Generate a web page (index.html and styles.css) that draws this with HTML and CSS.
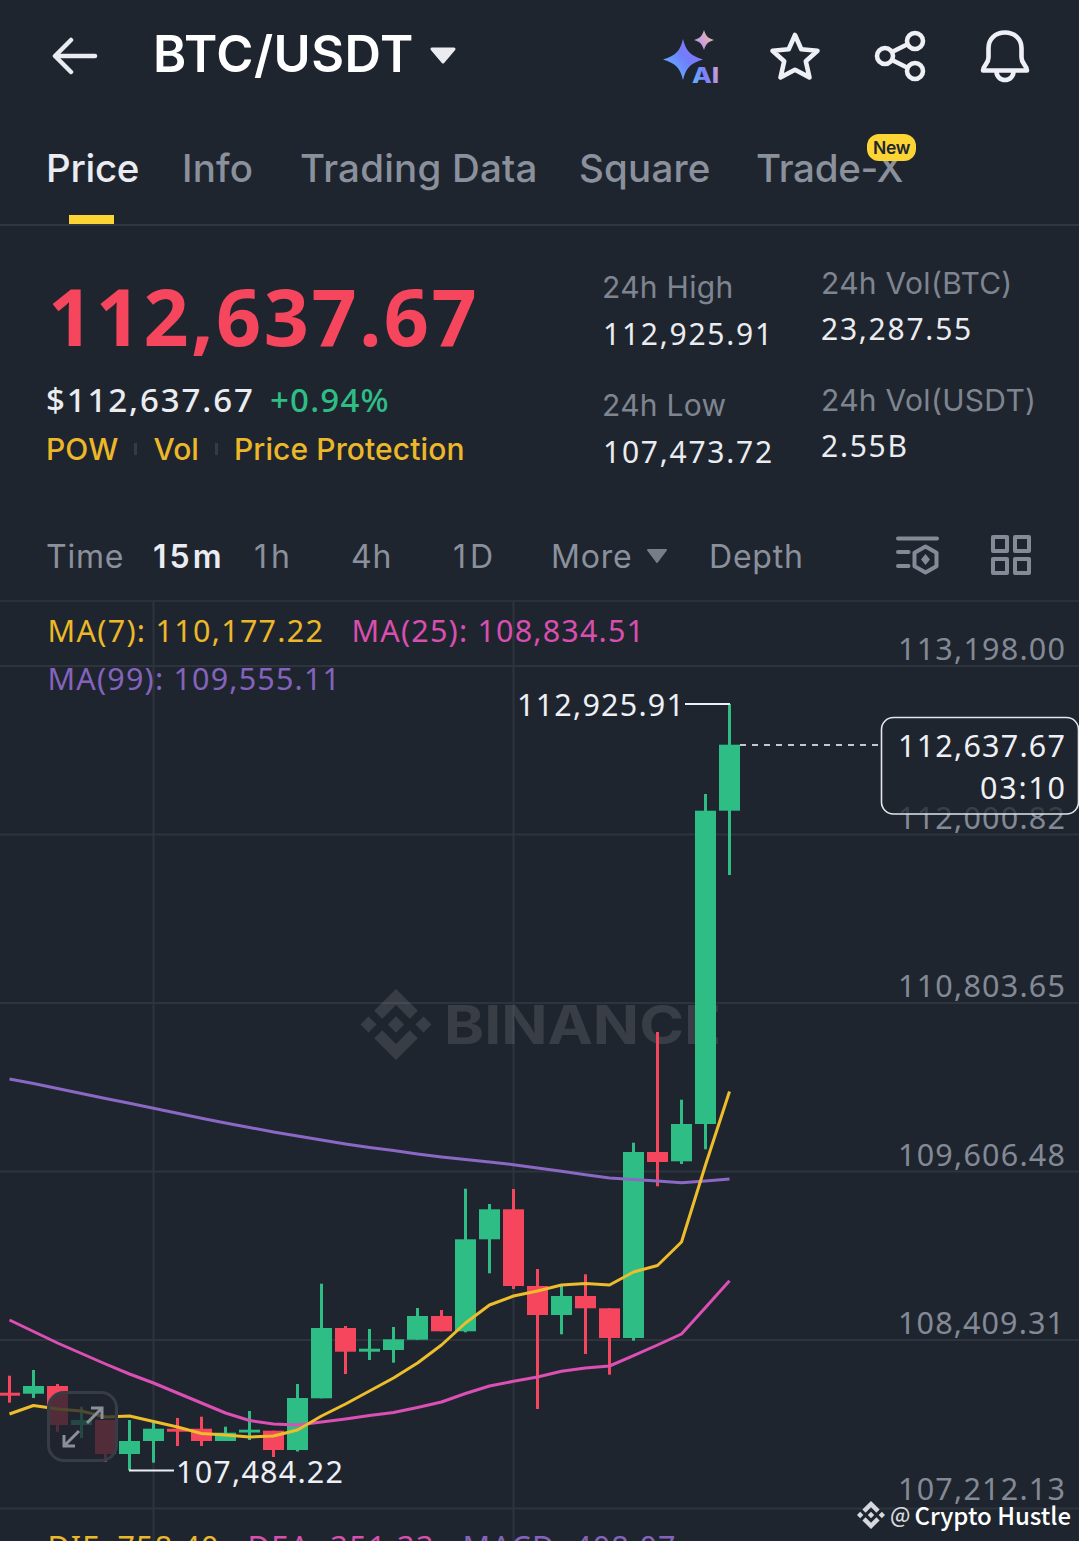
FILE: index.html
```html
<!DOCTYPE html>
<html lang="en">
<head>
    <meta charset="UTF-8">
    <meta name="viewport" content="width=device-width, initial-scale=1.0">
    <title>BTC/USDT</title>
    <link rel="stylesheet" href="styles.css">
</head>
<body>
    <header class="header">
        <svg class="back" width="46" height="38" viewBox="0 0 46 38"><path d="M43 19H4M19 3L3 19l16 16"/></svg>
        <h1 class="pair">BTC/USDT</h1>
        <svg class="caret" width="28" height="20" viewBox="0 0 28 20"><path d="M3 3h22L14 16z"/></svg>
        <div class="actions">
            <svg class="assistant" width="58" height="58" viewBox="0 0 58 58">
                <defs>
                    <linearGradient id="star" x1="0" y1="1" x2="1" y2="0.2">
                        <stop offset="0" stop-color="#5cc8ff"/>
                        <stop offset="0.6" stop-color="#717cfb"/>
                        <stop offset="1" stop-color="#8a7cff"/>
                    </linearGradient>
                    <linearGradient id="spark" x1="0" y1="0.8" x2="1" y2="0.2">
                        <stop offset="0" stop-color="#b094ff"/>
                        <stop offset="1" stop-color="#f3b79c"/>
                    </linearGradient>
                    <linearGradient id="ai" x1="0" y1="0.6" x2="1" y2="0.4">
                        <stop offset="0" stop-color="#62b4f8"/>
                        <stop offset="0.5" stop-color="#7a80fa"/>
                        <stop offset="1" stop-color="#d3a0d8"/>
                    </linearGradient>
                </defs>
                <path fill="url(#star)" d="M21 10C24 22 28 26.500 41 30.500C28 34.500 24 39 21 51C18 39 14 34.500 1 30.500C14 26.500 18 22 21 10z"/>
                <path fill="url(#spark)" d="M42 1C44 7.500 46 9 52 11C46 13 44 14.500 42 21C40 14.500 38 13 32 11C38 9 40 7.500 42 1z"/>
                <text class="ai" x="30" y="54" fill="url(#ai)" textLength="27" lengthAdjust="spacingAndGlyphs">AI</text>
            </svg>
            <svg class="line-icon" width="52" height="52" viewBox="0 0 52 52"><path d="M26 5l6.300 14.200 16.200 1.600-11.700 10.400 3.700 16.200L26 39.800 11.500 47.400l3.700-16.200L3.500 20.800l16.200-1.600z"/></svg>
            <svg class="line-icon" width="52" height="52" viewBox="0 0 52 52"><circle cx="11" cy="26" r="8"/><circle cx="41" cy="11" r="8"/><circle cx="41" cy="41" r="8"/><path d="M18 22l16-8M18 30l16 8"/></svg>
            <svg class="line-icon" width="52" height="54" viewBox="0 0 52 54"><path d="M26 3.500C16.500 3.500 9.500 10 9.500 19v9.500C9.500 35 4 36.500 4 41.500h44C48 36.500 42.500 35 42.500 28.500V19C42.500 10 35.500 3.500 26 3.500zM17.500 42.500a8.500 8.500 0 0 0 17 0"/></svg>
        </div>
    </header>

    <nav class="tabs">
        <a class="tab active">Price</a>
        <a class="tab">Info</a>
        <a class="tab">Trading Data</a>
        <a class="tab">Square</a>
        <a class="tab trade">Trade-X<span class="badge">New</span></a>
    </nav>

    <section class="summary">
        <div class="quote">
            <div class="last">112,637.67</div>
            <div class="fiat"><span class="usd">$112,637.67</span><span class="change">+0.94%</span></div>
            <div class="tags"><span>POW</span><i></i><span>Vol</span><i></i><span>Price Protection</span></div>
        </div>
        <dl class="stats">
            <dt>24h High</dt>
            <dd>112,925.91</dd>
            <dt>24h Low</dt>
            <dd>107,473.72</dd>
        </dl>
        <dl class="stats volume">
            <dt>24h Vol(BTC)</dt>
            <dd>23,287.55</dd>
            <dt>24h Vol(USDT)</dt>
            <dd>2.55B</dd>
        </dl>
    </section>

    <nav class="intervals">
        <span>Time</span>
        <span class="selected">15m</span>
        <span class="wide">1h</span>
        <span>4h</span>
        <span class="wide">1D</span>
        <span class="more">More<svg width="22" height="16" viewBox="0 0 22 16"><path d="M2 2h18L11 14z"/></svg></span>
        <span>Depth</span>
        <svg class="tool" width="44" height="44" viewBox="0 0 44 44"><path d="M2 5.500h39M2 19h10.500M2 33h10.500M29.500 13.500l11 6.300v13.400l-11 6.300-11-6.300V19.800z"/><path class="solid" d="M29.500 21l4.500 5.500-4.500 5.500-4.500-5.500z"/></svg>
        <svg class="tool" width="42" height="44" viewBox="0 0 42 44"><path d="M3 4h14v14H3zM25 4h14v14H25zM3 26h14v14H3zM25 26h14v14H25z"/></svg>
    </nav>

    <main class="chart">
        <svg id="chart" width="1079" height="939" viewBox="0 602 1079 939">
            <g class="grid">
                <path d="M0 666H1079M0 834.500H1079M0 1003H1079M0 1171.500H1079M0 1340H1079M0 1508.500H1079M153.500 602V1541M513.500 602V1541"/>
            </g>
            <g class="watermark">
                <svg x="360" y="989" width="72" height="71" viewBox="0 0 126.610 126.610"><use href="#logo"/></svg>
                <text x="444" y="1044" textLength="277" lengthAdjust="spacingAndGlyphs">BINANCE</text>
            </g>
            <g class="axis">
                <text x="898" y="660" textLength="167">113,198.00</text>
                <text x="898" y="829" textLength="167">112,000.82</text>
                <text x="898" y="997" textLength="167">110,803.65</text>
                <text x="898" y="1166" textLength="167">109,606.48</text>
                <text x="898" y="1334" textLength="166">108,409.31</text>
                <text x="898" y="1500" textLength="167">107,212.13</text>
            </g>
            <g id="candles"></g>
            <polyline class="ma99" id="ma99"/>
            <polyline class="ma25" id="ma25"/>
            <polyline class="ma7" id="ma7"/>
            <g class="legend">
                <text class="c7" x="47.500" y="642" textLength="275.500">MA(7): 110,177.22</text>
                <text class="c25" x="351.500" y="642" textLength="292.500">MA(25): 108,834.51</text>
                <text class="c99" x="47.500" y="690" textLength="292.500">MA(99): 109,555.11</text>
                <text class="c7" x="47.500" y="1558" textLength="171">DIF: 758.40</text>
                <text class="c25" x="247.500" y="1558" textLength="186">DEA: 351.33</text>
                <text class="c99" x="462.500" y="1558" textLength="213">MACD: 408.07</text>
            </g>
            <g class="marks">
                <path d="M685 704H730M129 1470.500H174"/>
                <path class="dash" d="M740 745H880"/>
                <rect x="881.500" y="717.500" width="197" height="96.500" rx="12"/>
                <text x="517" y="716" textLength="167">112,925.91</text>
                <text x="176" y="1483" textLength="167">107,484.22</text>
                <text x="898" y="757" textLength="167">112,637.67</text>
                <text x="980" y="799" textLength="85">03:10</text>
            </g>
            <defs>
                <path id="logo" d="M38.730 53.200l24.590-24.580 24.600 24.600 14.300-14.310L63.320 0l-38.900 38.900zM0 63.310l14.300-14.310 14.310 14.310-14.310 14.300zM38.730 73.410l24.590 24.590 24.600-24.600 14.310 14.290-38.900 38.910-38.910-38.880zM98 63.310l14.300-14.310 14.310 14.300-14.310 14.320zM77.830 63.300L63.320 48.780 48.790 63.300l14.530 14.500z"/>
            </defs>
        </svg>
        <button class="expand"><svg width="44" height="44" viewBox="0 0 44 44"><path d="M26 18L41 3M30 3h11v11M18 26L3 41M3 30v11h11"/></svg></button>
        <div class="credit">
            <svg width="28" height="28" viewBox="0 0 126.610 126.610"><use href="#logo"/></svg>
            <span class="at">@</span><span>Crypto Hustle</span>
        </div>
    </main>

    <script>
        // [direction, high, body top, body bottom, low] in chart coordinates
        const candles = [
            ['down', 1375.7, 1392.7, 1395.7, 1402.7],
            ['up', 1370, 1386, 1393.7, 1398],
            ['down', 1384, 1386, 1425, 1431.7],
            ['up', 1406.7, 1420, 1425, 1438],
            ['down', 1420, 1420, 1454, 1461.7],
            ['up', 1420, 1441, 1454, 1470.3],
            ['up', 1422.7, 1428.7, 1441, 1462.7],
            ['down', 1418, 1428.7, 1431.7, 1446],
            ['down', 1416.7, 1428.7, 1441, 1446],
            ['up', 1426.7, 1432.7, 1441, 1441],
            ['up', 1411, 1429.7, 1432.5, 1440],
            ['down', 1430.7, 1430.7, 1450, 1457],
            ['up', 1384, 1398, 1450, 1451.5],
            ['up', 1283.7, 1328, 1398.3, 1398.3],
            ['down', 1326, 1328, 1351.7, 1374],
            ['up', 1329, 1348.7, 1351.7, 1360],
            ['up', 1327, 1339.3, 1350, 1362.7],
            ['up', 1308, 1316, 1339.7, 1339.7],
            ['down', 1310, 1316, 1331.3, 1331.3],
            ['up', 1188.7, 1239.3, 1331.3, 1332.3],
            ['up', 1204, 1209.3, 1239.3, 1273.3],
            ['down', 1189, 1209.3, 1286, 1289],
            ['down', 1269, 1286, 1315, 1409],
            ['up', 1285.7, 1296, 1315, 1334.3],
            ['down', 1274.3, 1296, 1308.3, 1354],
            ['down', 1308.3, 1308.3, 1338, 1374.7],
            ['up', 1142.7, 1152, 1338, 1340.7],
            ['down', 1032, 1152, 1162, 1186.3],
            ['up', 1099.7, 1124, 1161.3, 1164],
            ['up', 794, 810.7, 1124, 1149.3],
            ['up', 704, 744.7, 810.7, 875]
        ];
        const ma7 = [1414, 1405.5, 1409, 1411, 1417, 1416, 1421.5, 1427, 1433.5, 1435, 1437, 1436, 1430, 1416, 1404, 1391, 1378, 1363, 1345, 1323, 1305, 1296, 1291, 1285, 1283.5, 1285, 1272, 1265.5, 1242, 1165, 1091.5];
        const ma25 = [1320, 1331.5, 1343, 1353.5, 1364, 1374, 1383, 1393, 1403, 1413, 1420.5, 1424, 1425, 1422, 1419, 1415.5, 1412.5, 1407.5, 1402, 1393.5, 1386, 1381.3, 1377, 1371.3, 1368, 1366, 1355.7, 1345, 1334, 1307.5, 1280.7];
        const ma99 = [1079, 1083.5, 1088.5, 1093.5, 1098.5, 1103.3, 1108.3, 1113.3, 1118.3, 1123, 1127.5, 1132, 1136, 1140, 1144, 1147.5, 1150.5, 1154, 1157, 1159.5, 1162, 1164.7, 1168, 1171.3, 1174.7, 1178, 1179.5, 1181, 1182.7, 1181, 1179];

        const x = i => 9.5 + i * 24;

        document.getElementById('candles').innerHTML = candles.map(([dir, high, top, bottom, low], i) =>
            `<g class="${dir}"><rect x="${x(i) - 1.5}" y="${high}" width="3" height="${low - high}"/>` +
            `<rect x="${x(i) - 10.5}" y="${top}" width="21" height="${bottom - top}"/></g>`
        ).join('');

        function drawLine(id, values) {
            document.getElementById(id).setAttribute('points', values.map((y, i) => x(i) + ',' + y).join(' '));
        }
        drawLine('ma7', ma7);
        drawLine('ma25', ma25);
        drawLine('ma99', ma99);
    </script>
</body>
</html>
```
FILE: styles.css
```css
* {
    box-sizing: border-box;
}
body {
    margin: 0;
    width: 1079px;
    height: 1541px;
    overflow: hidden;
    background: #1f252f;
    color: #eaecef;
    font-family: Inter, "Noto Sans", sans-serif;
}
svg {
    display: block;
    flex: none;
}
.header {
    display: flex;
    align-items: center;
    height: 112px;
    padding: 0 48px 0 52px;
}
.back {
    fill: none;
    stroke: #eaecf2;
    stroke-width: 4.5;
    stroke-linecap: round;
    stroke-linejoin: round;
}
.pair {
    margin: -5px 0 0 55px;
    width: 276px;
    color: #fff;
    font-size: 50.5px;
    font-weight: 600;
    letter-spacing: 0.5px;
    white-space: nowrap;
}
.caret {
    fill: #eaecf2;
    stroke: #eaecf2;
    stroke-width: 3;
    stroke-linejoin: round;
}
.actions {
    display: flex;
    align-items: center;
    gap: 53px;
    margin-left: auto;
}
.assistant {
    margin: 4px -4px 0 0;
}
.ai {
    font-size: 21px;
    font-weight: 800;
}
.line-icon {
    fill: none;
    stroke: #eef0f5;
    stroke-width: 4.6;
    stroke-linejoin: round;
}
.tabs {
    display: grid;
    grid-template-columns: 136px 118px 279px 177px 160px;
    height: 114px;
    padding-left: 46px;
    border-bottom: 2px solid #303741;
}
.tab {
    position: relative;
    justify-self: start;
    padding-top: 33px;
    color: #8b919c;
    font-size: 38.5px;
    font-weight: 500;
    line-height: 47px;
    letter-spacing: 0.2px;
    white-space: nowrap;
}
.tab.active {
    color: #eaecf2;
    letter-spacing: -0.3px;
}
.tab.trade {
    letter-spacing: -0.3px;
}
.tab.active::after {
    content: "";
    position: absolute;
    left: 23px;
    bottom: 0;
    width: 45px;
    height: 9px;
    background: #fcd535;
}
.badge {
    position: absolute;
    left: 111px;
    top: 22px;
    width: 49px;
    height: 27px;
    border-radius: 12px;
    background: #fcd535;
    color: #202630;
    font-size: 17.5px;
    font-weight: 600;
    line-height: 27px;
    letter-spacing: -0.4px;
    text-align: center;
}
.summary {
    display: grid;
    grid-template-columns: 556px 219px auto;
    height: 284px;
    padding-left: 46px;
}
.quote {
    padding-top: 43px;
}
.last {
    padding-left: 2px;
    color: #f6465d;
    font-family: "Noto Sans", sans-serif;
    font-size: 79px;
    font-weight: 700;
    line-height: 94px;
    letter-spacing: 2.5px;
}
.fiat {
    display: flex;
    margin-top: 17px;
    font-family: "Noto Sans", sans-serif;
    font-size: 33px;
    font-weight: 500;
    line-height: 40px;
    letter-spacing: 1.9px;
}
.usd {
    width: 224px;
}
.change {
    color: #2ebd85;
    letter-spacing: 1.2px;
}
.tags {
    display: flex;
    align-items: center;
    margin-top: 10px;
    color: #ecb82a;
    font-size: 30px;
    font-weight: 500;
    line-height: 38px;
    letter-spacing: 0.1px;
    white-space: nowrap;
}
.tags i {
    width: 3px;
    height: 12px;
    margin: 0 16px;
    background: #343b46;
}
.stats {
    margin: 0;
    padding-top: 41px;
    font-size: 30px;
}
.stats dt {
    color: #7f8590;
    line-height: 40px;
    letter-spacing: 0.3px;
}
.stats dd {
    margin: 7px 0 31px 1px;
    font-family: "Noto Sans", sans-serif;
    line-height: 40px;
    letter-spacing: 1.75px;
}
.volume {
    padding-top: 37px;
}
.volume dd {
    margin: 6px 0 31px;
}
.intervals {
    display: grid;
    grid-template-columns: 107px 101px 97px 102px 98px 158px 187px 94px 42px;
    align-items: center;
    height: 92px;
    padding-left: 46px;
    border-bottom: 2px solid #2a313c;
    color: #8b919c;
    font-size: 32px;
    letter-spacing: 0.8px;
    white-space: nowrap;
}
.intervals span {
    padding-top: 2px;
}
.intervals .selected {
    color: #eaecf2;
    font-weight: 600;
    letter-spacing: 3px;
}
.intervals .wide {
    letter-spacing: 4px;
}
.more {
    display: flex;
    align-items: center;
    gap: 14px;
}
.more svg {
    fill: #777d89;
    stroke: #777d89;
    stroke-width: 2;
    stroke-linejoin: round;
}
.tool {
    fill: none;
    stroke: #858a96;
    stroke-width: 4;
    stroke-linecap: round;
    stroke-linejoin: round;
}
.tool .solid {
    fill: #858a96;
    stroke: none;
}
.chart {
    position: relative;
    height: 939px;
}
.axis,
.legend,
.marks {
    font-family: "Noto Sans", sans-serif;
    font-size: 30.5px;
}
.grid path {
    stroke: #2d343e;
    stroke-width: 2;
}
.watermark {
    fill: #fff;
    font-size: 54px;
    font-weight: 700;
    opacity: 0.11;
}
.axis {
    fill: #848a95;
}
.up {
    fill: #2ebd85;
}
.down {
    fill: #f6465d;
}
polyline {
    fill: none;
    stroke-width: 3;
    stroke-linejoin: round;
}
.ma7 {
    stroke: #eebd2c;
}
.ma25 {
    stroke: #dc4fb4;
}
.ma99 {
    stroke: #8a68c3;
}
.c7 {
    fill: #ecb82a;
}
.c25 {
    fill: #d94fb0;
}
.c99 {
    fill: #8563bd;
}
.marks {
    fill: #eef0f5;
}
.marks path {
    stroke: #eef0f5;
    stroke-width: 2;
}
.marks .dash {
    stroke: #c3c7ce;
    stroke-dasharray: 6 6;
}
.marks rect {
    fill: #1f252f;
    fill-opacity: 0.75;
    stroke: #e3e5ea;
    stroke-width: 1.6;
}
.expand {
    position: absolute;
    left: 47px;
    top: 789px;
    width: 71px;
    height: 71px;
    padding: 0;
    display: grid;
    place-items: center;
    border: 3px solid #363d47;
    border-radius: 17px;
    background: rgba(31, 37, 47, 0.76);
}
.expand svg {
    fill: none;
    stroke: #8a8f99;
    stroke-width: 3;
}
.credit {
    position: absolute;
    left: 857px;
    top: 895px;
    display: flex;
    align-items: center;
    height: 36px;
    color: #fff;
    font-family: "Noto Sans CJK SC", sans-serif;
    font-size: 24px;
    font-weight: 500;
    white-space: nowrap;
}
.credit svg {
    fill: #d5d8dc;
}
.credit span {
    margin-top: -2px;
}
.credit .at {
    margin: -3px 4px 0 5px;
    color: #d5d8dc;
    font-size: 21px;
}
```
